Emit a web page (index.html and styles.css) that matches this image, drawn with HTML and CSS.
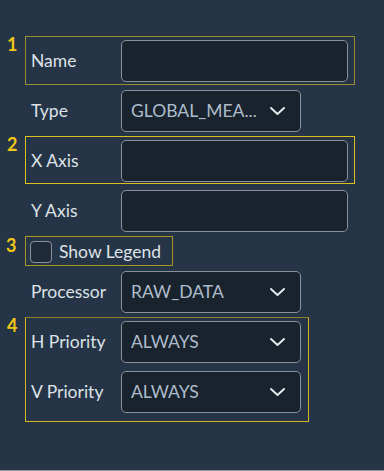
FILE: index.html
```html
<!DOCTYPE html>
<html>
<head>
<meta charset="utf-8">
<link rel="stylesheet" href="styles.css">
</head>
<body>
<div class="panel">
  <div class="hl hl-1">
    <span class="badge">1</span>
    <div class="row">
      <label class="label">Name</label>
      <div class="field input wide"></div>
    </div>
  </div>
  <div class="row">
    <label class="label">Type</label>
    <div class="field select"><span class="val">GLOBAL_MEA...</span><svg class="chev" viewBox="0 0 15 8" width="15" height="8"><path d="M1 1l6.5 6 6.5-6" /></svg></div>
  </div>
  <div class="hl hl-2">
    <span class="badge">2</span>
    <div class="row">
      <label class="label">X Axis</label>
      <div class="field input wide"></div>
    </div>
  </div>
  <div class="row">
    <label class="label">Y Axis</label>
    <div class="field input wide"></div>
  </div>
  <div class="hl hl-3 check-row">
    <span class="badge">3</span>
    <span class="box"></span>
    <span class="check-label">Show Legend</span>
  </div>
  <div class="row">
    <label class="label">Processor</label>
    <div class="field select"><span class="val">RAW_DATA</span><svg class="chev" viewBox="0 0 15 8" width="15" height="8"><path d="M1 1l6.5 6 6.5-6" /></svg></div>
  </div>
  <div class="hl hl-4 group">
    <span class="badge">4</span>
    <div class="row">
      <label class="label">H Priority</label>
      <div class="field select"><span class="val">ALWAYS</span><svg class="chev" viewBox="0 0 15 8" width="15" height="8"><path d="M1 1l6.5 6 6.5-6" /></svg></div>
    </div>
    <div class="row">
      <label class="label">V Priority</label>
      <div class="field select"><span class="val">ALWAYS</span><svg class="chev" viewBox="0 0 15 8" width="15" height="8"><path d="M1 1l6.5 6 6.5-6" /></svg></div>
    </div>
  </div>
</div>
<div class="bottom-line"></div>
</body>
</html>
```
FILE: styles.css
```css
html, body {
  margin: 0;
  padding: 0;
  background: #253446;
  height: 100%;
  overflow: hidden;
}
body {
  font-family: Lato, "Noto Sans", sans-serif;
  color: #dde2e7;
  position: relative;
}
.panel {
  padding: 40px 0 0 31px;
  display: flex;
  flex-direction: column;
  gap: 8px;
}
.row {
  display: flex;
  align-items: center;
  height: 42px;
}
.label {
  width: 90px;
  font-size: 17.5px;
  color: #dde2e7;
  margin-top: -1px;
}
.field {
  box-sizing: border-box;
  height: 42px;
  border: 1px solid #8b9199;
  border-radius: 5px;
  background: #19232e;
}
.wide { width: 227px; }
.select {
  width: 180px;
  display: flex;
  align-items: center;
  justify-content: space-between;
  padding: 0 15px 0 9px;
}
.val {
  font-size: 17.5px;
  color: #aebccb;
  margin-top: -1px;
}
.chev path {
  fill: none;
  stroke: #e8ecef;
  stroke-width: 1.9;
  stroke-linecap: round;
  stroke-linejoin: round;
}
.hl { position: relative; }
.hl::after {
  content: "";
  position: absolute;
  border: 1px solid #c9b122;
  pointer-events: none;
}
.hl-1::after { top: -4px; bottom: -3px; left: -6px; right: 29px; border-color: #9c8d2c; }
.hl-2::after { top: -4px; bottom: -2px; left: -6px; right: 29px; border-color: #dcc01c; }
.hl-3::after { top: -5px; bottom: -3px; left: -5px; right: 211px; border-color: #a8961e; }
.hl-4::after { top: -4px; bottom: -9px; left: -6px; right: 75px; border-color: #d4b81e; }
.hl-4::after { border-top-color: #8e8228; }
.badge {
  position: absolute;
  left: -24px;
  top: -7px;
  font-size: 18px;
  font-weight: 700;
  color: #f2c814;
  line-height: 22px;
}
.hl-3 .badge { top: -7px; }
.group {
  display: flex;
  flex-direction: column;
  gap: 8px;
}
.check-row {
  display: flex;
  align-items: center;
  height: 22px;
  margin: 1px 0 0 -1px;
  gap: 7px;
}
.box {
  box-sizing: border-box;
  width: 22px;
  height: 22px;
  border: 1px solid #8b9199;
  border-radius: 4px;
  background: #1e2a37;
}
.check-label {
  font-size: 17.5px;
  color: #dde2e7;
  margin-top: -1px;
}
.bottom-line {
  position: absolute;
  left: 0;
  right: 0;
  bottom: 0;
  height: 1px;
  background: #8e969e;
}
```
